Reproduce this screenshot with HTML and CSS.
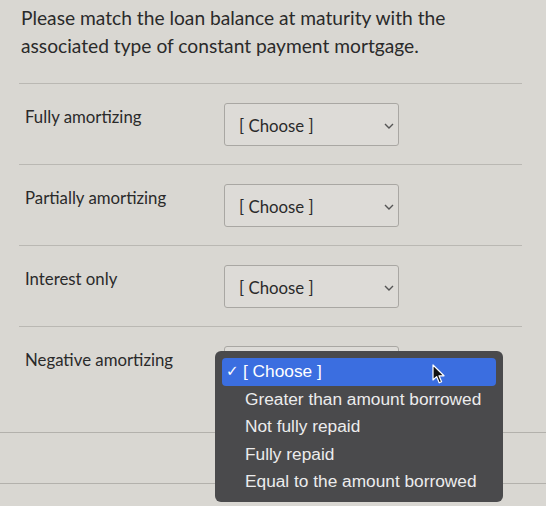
FILE: index.html
```html
<!DOCTYPE html>
<html>
<head>
<meta charset="utf-8">
<link rel="stylesheet" href="styles.css">
</head>
<body>
<div class="page">
  <p class="prompt">Please match the loan balance at maturity with the associated type of constant payment mortgage.</p>
  <div class="rows">
    <div class="row">
      <div class="label">Fully amortizing</div>
      <div class="select"><span>[ Choose ]</span><svg class="chev" viewBox="0 0 10 6" width="10" height="6"><path d="M1 1 L5 5 L9 1" fill="none" stroke="#555" stroke-width="1.4"/></svg></div>
    </div>
    <div class="row">
      <div class="label">Partially amortizing</div>
      <div class="select"><span>[ Choose ]</span><svg class="chev" viewBox="0 0 10 6" width="10" height="6"><path d="M1 1 L5 5 L9 1" fill="none" stroke="#555" stroke-width="1.4"/></svg></div>
    </div>
    <div class="row">
      <div class="label">Interest only</div>
      <div class="select"><span>[ Choose ]</span><svg class="chev" viewBox="0 0 10 6" width="10" height="6"><path d="M1 1 L5 5 L9 1" fill="none" stroke="#555" stroke-width="1.4"/></svg></div>
    </div>
    <div class="row row-last">
      <div class="label">Negative amortizing</div>
      <div class="select select-open"></div>
    </div>
  </div>
  <div class="rule"></div>
  <div class="rule"></div>

  <div class="menu">
    <div class="item active"><span class="check">✓</span><span>[ Choose ]</span></div>
    <div class="item">Greater than amount borrowed</div>
    <div class="item">Not fully repaid</div>
    <div class="item">Fully repaid</div>
    <div class="item">Equal to the amount borrowed</div>
  </div>
  <svg class="cursor" viewBox="0 0 13 21" width="13" height="21"><path d="M1 1 L1 16 L4.6 12.6 L7.2 18.8 L9.6 17.8 L7 11.8 L12 11.8 Z" fill="#111" stroke="#fff" stroke-width="1.2" stroke-linejoin="round"/></svg>
</div>
</body>
</html>
```

FILE: styles.css
```css
html, body {
  margin: 0;
  padding: 0;
  background: #d9d7d2;
}
.page {
  position: relative;
  width: 546px;
  height: 506px;
  overflow: hidden;
  font-family: Lato, "Liberation Sans", sans-serif;
  color: #2a2a2a;
}
.prompt {
  margin: 0;
  padding: 4px 75px 0 21px;
  font-size: 19.2px;
  line-height: 28px;
  height: 83px;
  box-sizing: border-box;
}
.rows {
  margin: 0 24px 0 19px;
}
.row {
  display: flex;
  align-items: flex-start;
  border-top: 1px solid #bab8b3;
  padding: 19px 0 18px;
}
.row-last {
  padding-bottom: 43px;
}
.label {
  width: 199px;
  padding-left: 6px;
  margin-top: 4px;
  font-size: 16.8px;
  line-height: 20px;
}
.select {
  width: 175px;
  height: 43px;
  box-sizing: border-box;
  border: 1px solid #a9a7a3;
  border-radius: 3px;
  background: #dddbd7;
  display: flex;
  align-items: center;
  justify-content: space-between;
  padding: 2px 4px 0 14px;
  font-size: 16.8px;
}
.chev {
  display: block;
}
.rule {
  height: 50px;
  border-top: 1px solid #b3b1ac;
}
.menu {
  position: absolute;
  left: 215px;
  top: 351px;
  width: 288px;
  height: 151px;
  box-sizing: border-box;
  padding: 7px;
  background: #4a4a4c;
  border-radius: 6px;
  font-family: "Liberation Sans", Arial, sans-serif;
  font-size: 17.3px;
  color: #ececec;
}
.item {
  height: 27.5px;
  line-height: 27.5px;
  padding-left: 23px;
  border-radius: 4px;
  white-space: nowrap;
}
.item.active {
  display: flex;
  align-items: center;
  padding-left: 4px;
  background: #3b6ee0;
  color: #fff;
}
.check {
  width: 17px;
  font-family: "DejaVu Sans", sans-serif;
  font-size: 15px;
  font-weight: bold;
}
.cursor {
  position: absolute;
  left: 432px;
  top: 364px;
}
```
